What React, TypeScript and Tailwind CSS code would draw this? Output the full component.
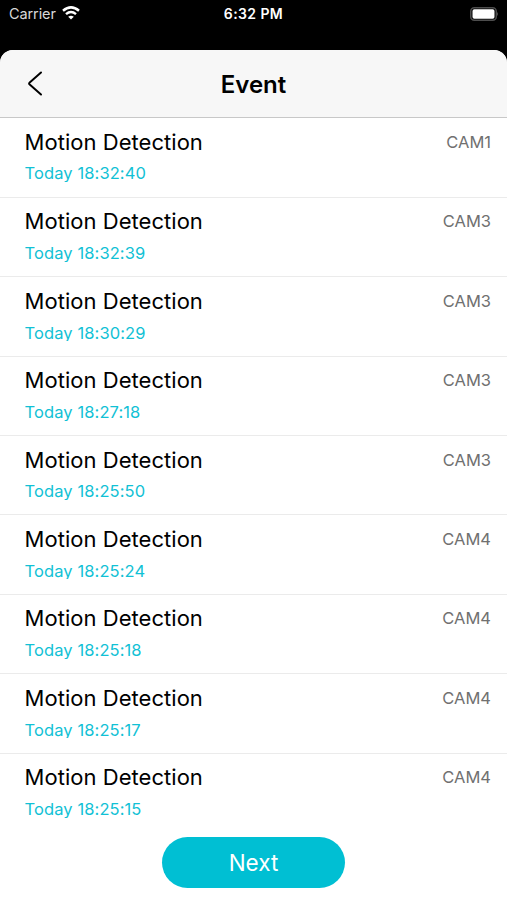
const events = [
  ["18:32:40", "CAM1"], ["18:32:39", "CAM3"], ["18:30:29", "CAM3"],
  ["18:27:18", "CAM3"], ["18:25:50", "CAM3"], ["18:25:24", "CAM4"],
  ["18:25:18", "CAM4"], ["18:25:17", "CAM4"], ["18:25:15", "CAM4"],
];

export default function App() {
  return (
    <div className="flex h-[900px] w-[507px] flex-col overflow-hidden bg-black font-['Inter',sans-serif]">
      <div className="grid h-[50px] shrink-0 grid-cols-3 items-start px-[9px] text-white">
        <div className="flex h-[27px] items-center gap-[6px] text-[14.5px] text-[#d8d8d8]">
          <span className="w-[47px] pt-px tracking-[-0.1px]">Carrier</span>
          <svg className="mb-px" width="18" height="14" viewBox="0 0 18 14" fill="none" stroke="white" strokeWidth="2.5">
            <path d="M1 4.8Q9-2 17 4.8M4 8.1q5-4.2 10 0" />
            <path d="M9 13.5 6.2 10.7q2.8-2 5.6 0Z" fill="white" stroke="none" />
          </svg>
        </div>
        <div className="flex h-[27px] items-center justify-center text-[14px] font-semibold tracking-[0.4px]">6:32 PM</div>
        <div className="flex h-[27px] items-center justify-end">
          <svg width="28" height="14" viewBox="0 0 28 14">
            <rect x=".75" y=".75" width="25.5" height="12.5" rx="3.5" fill="none" stroke="#4d4d4d" strokeWidth="1.5" />
            <rect x="2.5" y="2.2" width="22" height="9.6" rx="1.8" fill="white" />
            <path d="M27 5q1.5 2 0 4Z" fill="#666" />
          </svg>
        </div>
      </div>
      <div className="flex min-h-0 flex-1 flex-col overflow-hidden rounded-t-[13px] bg-white">
        <header className="grid h-[68px] shrink-0 grid-cols-3 items-center border-b border-[#c8c8c8] bg-[#f7f7f7]">
          <svg className="ml-[27px]" width="17" height="25" viewBox="0 0 17 25" fill="none" stroke="black" strokeWidth="2" strokeLinecap="round" strokeLinejoin="round">
            <path d="M14 1.5 2.7 11.4q-1.2 1.1 0 2.2L14 23.5" />
          </svg>
          <h1 className="pt-[2px] text-center text-[24px] font-semibold">Event</h1>
        </header>
        <main className="flex flex-col">
          {events.map(([time, cam]) => (
            <div key={time} className="flex h-[79.4px] shrink-0 items-start justify-between border-b border-[#ebebeb] pr-4 pl-[24.5px] first:h-[79.8px] last:border-transparent">
              <div className="pt-[9.6px]">
                <div className="text-[22px] leading-[28px] tracking-[0.04px]">Motion Detection</div>
                <div className="mt-[7.8px] h-[18.6px] overflow-hidden text-[16.5px] leading-[20px] tracking-[0.1px] text-[#11c1d5]">Today {time}</div>
              </div>
              <div className="pt-[13.6px] text-[16.5px] leading-[20px] text-[#707070]">{cam}</div>
            </div>
          ))}
        </main>
        <button className="mt-[4px] h-[51px] w-[183px] shrink-0 self-center rounded-full bg-[#00bfd3] pt-px text-[22.5px] text-white">Next</button>
      </div>
    </div>
  );
}
